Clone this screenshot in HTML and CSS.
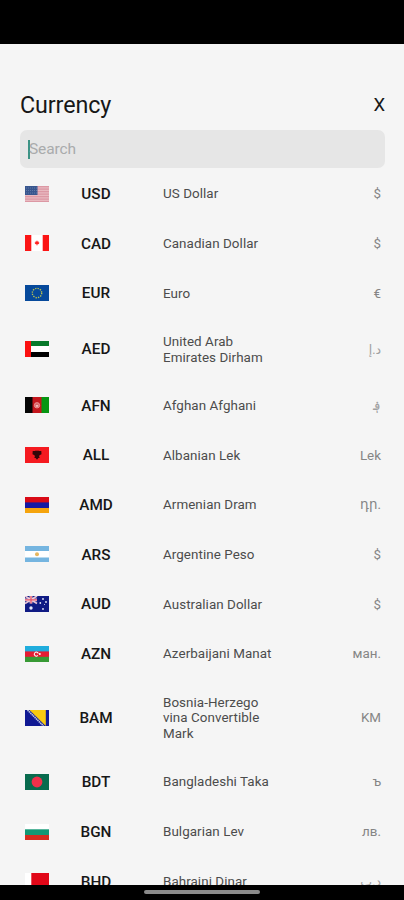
FILE: index.html
```html
<!DOCTYPE html>
<html lang="en">
<head>
    <meta charset="UTF-8">
    <meta name="viewport" content="width=device-width, initial-scale=1.0">
    <title>Currency</title>
    <link rel="stylesheet" href="styles.css">
</head>
<body>
    <div class="status-bar"></div>

    <main class="screen">
        <!-- Header -->
        <header class="header">
            <h1 class="title">Currency</h1>
            <span class="close">X</span>
        </header>

        <div class="search"><span class="caret"></span><span class="placeholder">Search</span></div>

        <!-- Currency List -->
        <ul class="list">
            <li class="row">
                <svg class="flag" viewBox="0 0 24 16"><rect width="24" height="16" fill="#e9b9c0"/><path d="M0 .6h24M0 3.1h24M0 5.6h24M0 8.1h24M0 10.6h24M0 13.1h24M0 15.5h24" stroke="#dc98a4" stroke-width="1.1"/><rect width="12.5" height="9" fill="#38568f"/><path d="M1 2h11M1 4.5h11M1 7h11" stroke="#7188b0" stroke-width=".7" stroke-dasharray="1 1"/></svg>
                <span class="code">USD</span><span class="name">US Dollar</span><span class="symbol">$</span>
            </li>
            <li class="row">
                <svg class="flag" viewBox="0 0 24 16"><rect width="24" height="16" fill="#fff"/><path d="M0 0h6.3v16H0zM17.7 0H24v16h-6.3z" fill="#fb1515"/><path d="M12 5.3l.8 1.4 1-.3-.2 1.2.9.1-.8 1.4-1.4.3v1.2h-.6V9.4l-1.4-.3-.8-1.4.9-.1-.2-1.2 1 .3z" fill="#f22"/></svg>
                <span class="code">CAD</span><span class="name">Canadian Dollar</span><span class="symbol">$</span>
            </li>
            <li class="row">
                <svg class="flag" viewBox="0 0 24 16"><rect width="24" height="16" fill="#06499b"/><circle cx="12" cy="8" r="4.7" fill="none" stroke="#b9c250" stroke-width="1.4" stroke-dasharray="1.3 1.16"/></svg>
                <span class="code">EUR</span><span class="name">Euro</span><span class="symbol">€</span>
            </li>
            <li class="row">
                <svg class="flag" viewBox="0 0 24 16"><rect width="24" height="16" fill="#fff"/><path d="M6 0h18v5H6z" fill="#087a2b"/><path d="M6 11h18v5H6z" fill="#000"/><path d="M0 0h6v16H0z" fill="#fb1111"/></svg>
                <span class="code">AED</span><span class="name">United Arab Emirates Dirham</span><span class="symbol arabic">د.إ</span>
            </li>
            <li class="row">
                <svg class="flag" viewBox="0 0 24 16"><rect width="24" height="16" fill="#c4161c"/><path d="M0 0h7.5v16H0z" fill="#050505"/><path d="M16.5 0H24v16h-7.5z" fill="#079612"/><circle cx="12" cy="8.3" r="2.7" fill="#dc686b" stroke="#ee9a9c" stroke-width=".8"/><path d="M10.8 8h2.4v1.8h-2.4z" fill="#f4bcbc"/></svg>
                <span class="code">AFN</span><span class="name">Afghan Afghani</span><span class="symbol arabic">؋</span>
            </li>
            <li class="row">
                <svg class="flag" viewBox="0 0 24 16"><rect width="24" height="16" fill="#f51a20"/><path d="M7.700 4h2.600l.7-.7 1 .9 1-.9.7.7h2.600l.2 3.200-2 1-.4 1.300.6 1.500-1.300.1L12 12.700l-1.400-1.600-1.300-.1.600-1.500-.4-1.300-2-1z" fill="#330608"/></svg>
                <span class="code">ALL</span><span class="name">Albanian Lek</span><span class="symbol">Lek</span>
            </li>
            <li class="row">
                <svg class="flag" viewBox="0 0 24 16"><rect width="24" height="16" fill="#d90b16"/><path d="M0 5.4h24V11H0z" fill="#1519a4"/><path d="M0 11h24v5H0z" fill="#f5a40d"/></svg>
                <span class="code">AMD</span><span class="name">Armenian Dram</span><span class="symbol">դր.</span>
            </li>
            <li class="row">
                <svg class="flag" viewBox="0 0 24 16"><rect width="24" height="16" fill="#fff"/><path d="M0 0h24v5H0zM0 11.5h24V16H0z" fill="#75b5e0"/><circle cx="12" cy="8.2" r="2" fill="#e6b75f"/></svg>
                <span class="code">ARS</span><span class="name">Argentine Peso</span><span class="symbol">$</span>
            </li>
            <li class="row">
                <svg class="flag" viewBox="0 0 24 16"><rect width="24" height="16" fill="#101b84"/><path d="M0 0l12 7.5M12 0L0 7.5" stroke="#e8c4d6" stroke-width="1.8"/><path d="M6 0v7.5M0 3.8h12" stroke="#f3d5dd" stroke-width="2.8"/><path d="M6 0v7.5M0 3.8h12" stroke="#e4546b" stroke-width="1.3"/><g fill="#e6e9fa"><circle cx="6" cy="12" r="1.7"/><circle cx="18" cy="3" r=".9"/><circle cx="15.3" cy="7" r=".9"/><circle cx="21" cy="6" r=".9"/><circle cx="18" cy="13" r=".9"/><circle cx="19.5" cy="8.5" r=".5"/></g></svg>
                <span class="code">AUD</span><span class="name">Australian Dollar</span><span class="symbol">$</span>
            </li>
            <li class="row">
                <svg class="flag" viewBox="0 0 24 16"><rect width="24" height="16" fill="#e51d34"/><path d="M0 0h24v5.4H0z" fill="#20addd"/><path d="M0 10.8h24V16H0z" fill="#389a35"/><circle cx="11.3" cy="8.1" r="2" fill="none" stroke="#fff" stroke-width="1" stroke-dasharray="9.5 3" transform="rotate(43 11.3 8.1)"/><circle cx="14.8" cy="8.1" r="1" fill="#fff"/></svg>
                <span class="code">AZN</span><span class="name">Azerbaijani Manat</span><span class="symbol">ман.</span>
            </li>
            <li class="row">
                <svg class="flag" viewBox="0 0 24 16"><rect width="24" height="16" fill="#101993"/><path d="M4.5 0h16.300v16z" fill="#f8ca10"/><path d="M2.500 0L18.500 16" stroke="#b9c1dc" stroke-width="1.700" stroke-dasharray="1.500 .5"/></svg>
                <span class="code">BAM</span><span class="name">Bosnia-Herzego<br>vina Convertible Mark</span><span class="symbol">KM</span>
            </li>
            <li class="row">
                <svg class="flag" viewBox="0 0 24 16"><rect width="24" height="16" fill="#086b4e"/><circle cx="12" cy="8" r="5.4" fill="#f0304a"/></svg>
                <span class="code">BDT</span><span class="name">Bangladeshi Taka</span><span class="symbol">ъ</span>
            </li>
            <li class="row">
                <svg class="flag" viewBox="0 0 24 16"><rect width="24" height="16" fill="#fff"/><path d="M0 5.3h24V11H0z" fill="#129874"/><path d="M0 11h24v5H0z" fill="#d52b1e"/></svg>
                <span class="code">BGN</span><span class="name">Bulgarian Lev</span><span class="symbol">лв.</span>
            </li>
            <li class="row">
                <svg class="flag" viewBox="0 0 24 16"><rect width="24" height="16" fill="#fff"/><path d="M6.3 0H24v16H6.3z" fill="#e10718"/></svg>
                <span class="code">BHD</span><span class="name">Bahraini Dinar</span><span class="symbol arabic">د.ب</span>
            </li>
        </ul>
    </main>

    <footer class="nav-bar"><div class="home-handle"></div></footer>
</body>
</html>
```
FILE: styles.css
```css
* {
    box-sizing: border-box;
}

body {
    display: flex;
    flex-direction: column;
    height: 100vh;
    margin: 0;
    overflow: hidden;
    background: #f5f5f5;
    color: #171717;
    font-family: Roboto, "Noto Sans", "DejaVu Sans", sans-serif;
}

.status-bar {
    flex: none;
    height: 44px;
    background: #000;
}

/* Screen */
.screen {
    flex: 1;
    min-height: 0;
    overflow: hidden;
    padding: 45px 19px 0 20px;
}

.header {
    display: flex;
    align-items: center;
    justify-content: space-between;
    height: 32px;
    margin-bottom: 9px;
}

.title {
    margin: 0;
    font-size: 23.3px;
    font-weight: 400;
    letter-spacing: -0.1px;
}

.close {
    font-size: 18.5px;
}

.search {
    display: flex;
    align-items: center;
    height: 38px;
    padding-left: 8px;
    border-radius: 7px;
    background: #e6e6e6;
}

.caret {
    width: 2px;
    height: 19px;
    background: #3d9384;
}

.placeholder {
    color: #a9abac;
    font-size: 15.5px;
    letter-spacing: -0.1px;
    margin-left: -1px;
}

/* Currency List */
.list {
    margin: 1.2px 0 0;
    padding: 0;
    list-style: none;
}

.row {
    display: flex;
    align-items: center;
    padding: 15.7px 4px 15.7px 4.5px;
}

.flag {
    flex: none;
    width: 24px;
    height: 16px;
    margin-top: -1px;
}

.code {
    width: 95px;
    font-size: 15.3px;
    font-weight: 500;
    line-height: 18.3px;
    text-align: center;
}

.name {
    width: 114px;
    margin-left: 19.5px;
    color: #4c4c4c;
    font-size: 13.4px;
    line-height: 15.7px;
    letter-spacing: 0.06px;
}

.symbol {
    flex: 1;
    color: #858585;
    font-size: 13.4px;
    line-height: 15.7px;
    text-align: right;
}

.arabic {
    color: #a0a0a0;
    font-size: 12.5px;
}

/* Bottom Bar */
.nav-bar {
    display: flex;
    flex: none;
    justify-content: center;
    height: 15px;
    padding-top: 5px;
    background: #000;
}

.home-handle {
    width: 116px;
    height: 4px;
    border-radius: 2px;
    background: #8a8a8a;
}
```
